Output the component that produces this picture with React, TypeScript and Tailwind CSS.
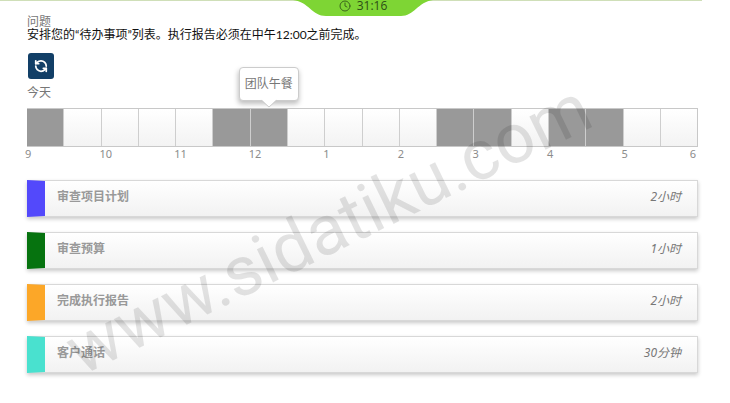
import { Clock, RefreshCcw } from "lucide-react";

const busySlots = [0, 5, 6, 11, 12, 14, 15];
const slots = Array.from({ length: 18 }, (_, i) => i);
const hours = ["9", "10", "11", "12", "1", "2", "3", "4"];

const tasks = [
  { name: "审查项目计划", duration: "2小时", color: "bg-[#5349fb]" },
  { name: "审查预算", duration: "1小时", color: "bg-[#06730f]" },
  { name: "完成执行报告", duration: "2小时", color: "bg-[#fca728]" },
  { name: "客户通话", duration: "30分钟", color: "bg-[#49e1cf]" },
];

function Timer() {
  return (
    <header className="mr-7 bg-linear-to-b from-[#cfdfb8] from-[1px] to-transparent to-[1px] pl-6">
      <div className="relative mx-auto flex h-4 w-[140px] items-start justify-center gap-[6px]">
        <svg className="absolute inset-0 h-full w-full" viewBox="0 0 140 16" preserveAspectRatio="none" aria-hidden="true">
          <path d="M0 0H140C125 2 121 16 108 16H33C19 16 16 2 0 0Z" fill="#7ed534" />
        </svg>
        <Clock className="relative size-[12px] text-[#3b641c]" strokeWidth={2} />
        <time className="relative font-['Open_Sans',sans-serif] text-[12px] leading-[12px] text-[#2d4d16]">31:16</time>
      </div>
    </header>
  );
}

function Timeline() {
  return (
    <section>
      <div className="flex h-[39px] border-y border-r border-[#c8c8c8] bg-linear-to-b from-white to-[#f3f3f3]">
        {slots.map((slot) => (
          <div
            key={slot}
            className={
              "relative flex-1 " +
              (slot < 17 ? "border-r border-[#cecece] " : "") +
              (busySlots.includes(slot) ? "bg-[#999999]" : "")
            }
          >
            {slot === 6 && (
              <div role="tooltip" className="absolute bottom-[45px] left-1/2 -translate-x-1/2 rounded border border-[#cccccc] bg-white px-[5px] py-[6px] text-[12px] leading-[20px] whitespace-nowrap text-[#777777] shadow-[0_3px_5px_rgba(0,0,0,0.25)]">
                团队午餐
                <svg className="absolute top-full left-1/2 h-2 w-4 -translate-x-1/2 overflow-visible" viewBox="0 0 16 8" aria-hidden="true">
                  <path d="M0 -1H16L8 7Z" fill="white" />
                  <path d="M0 0L8 7L16 0" fill="none" stroke="#cccccc" />
                </svg>
              </div>
            )}
          </div>
        ))}
      </div>
      <div className="-ml-[2px] flex font-['Noto_Sans',sans-serif] text-[11px] leading-[14px] text-[#8c8c8c]">
        {hours.map((hour) => (
          <span key={hour} className="flex-1">{hour}</span>
        ))}
        <span className="flex flex-1 justify-between pr-[2px]">
          <span>5</span>
          <span>6</span>
        </span>
      </div>
    </section>
  );
}

export default function App() {
  return (
    <div className="relative overflow-hidden bg-white font-['Noto_Sans','Noto_Sans_CJK_SC',sans-serif]">
      <Timer />
      <main className="mr-8 ml-[27px] pb-8">
        <h1 className="text-[12px] leading-[12px] text-[#777777]">问题</h1>
        <p className="font-['Lato','Noto_Sans_CJK_SC',sans-serif] text-[12px] leading-[14px] text-[#111111]">
          安排您的“待办事项”列表。执行报告必须在中午12:00之前完成。
        </p>
        <button type="button" aria-label="重置" className="mt-[11px] ml-px flex size-[26px] items-center justify-center rounded-[3px] bg-[#123f67] text-white">
          <RefreshCcw className="size-[14px]" strokeWidth={3} />
        </button>
        <h2 className="mt-[5px] mb-[6px] text-[12px] leading-[18px] text-[#777777]">今天</h2>
        <Timeline />
        <ul className="mt-[19px] flex flex-col gap-[15px]">
          {tasks.map((task) => (
            <li
              key={task.name}
              className="flex h-[37px] items-stretch border border-l-0 border-[#d8d8d8] bg-linear-to-b from-white to-[#f2f2f2] text-[12px] text-[#999999] shadow-[0_2px_4px_rgba(0,0,0,0.22)]"
            >
              <span className={"-my-px w-[18px] [clip-path:polygon(0_0,100%_1px,100%_36px,0_100%)] " + task.color} />
              <span className="ml-3 flex-1 pt-[7px] leading-[18px] font-bold">{task.name}</span>
              <em className="pt-[7px] pr-4 leading-[18px] text-[#777777]">{task.duration}</em>
            </li>
          ))}
        </ul>
      </main>
      <div className="pointer-events-none absolute top-[386px] left-[86px] origin-bottom-left -translate-y-full -rotate-[26deg] font-['Roboto',sans-serif] text-[70px] leading-[70px] whitespace-nowrap text-black/11">
        www.sidatiku.com
      </div>
    </div>
  );
}
